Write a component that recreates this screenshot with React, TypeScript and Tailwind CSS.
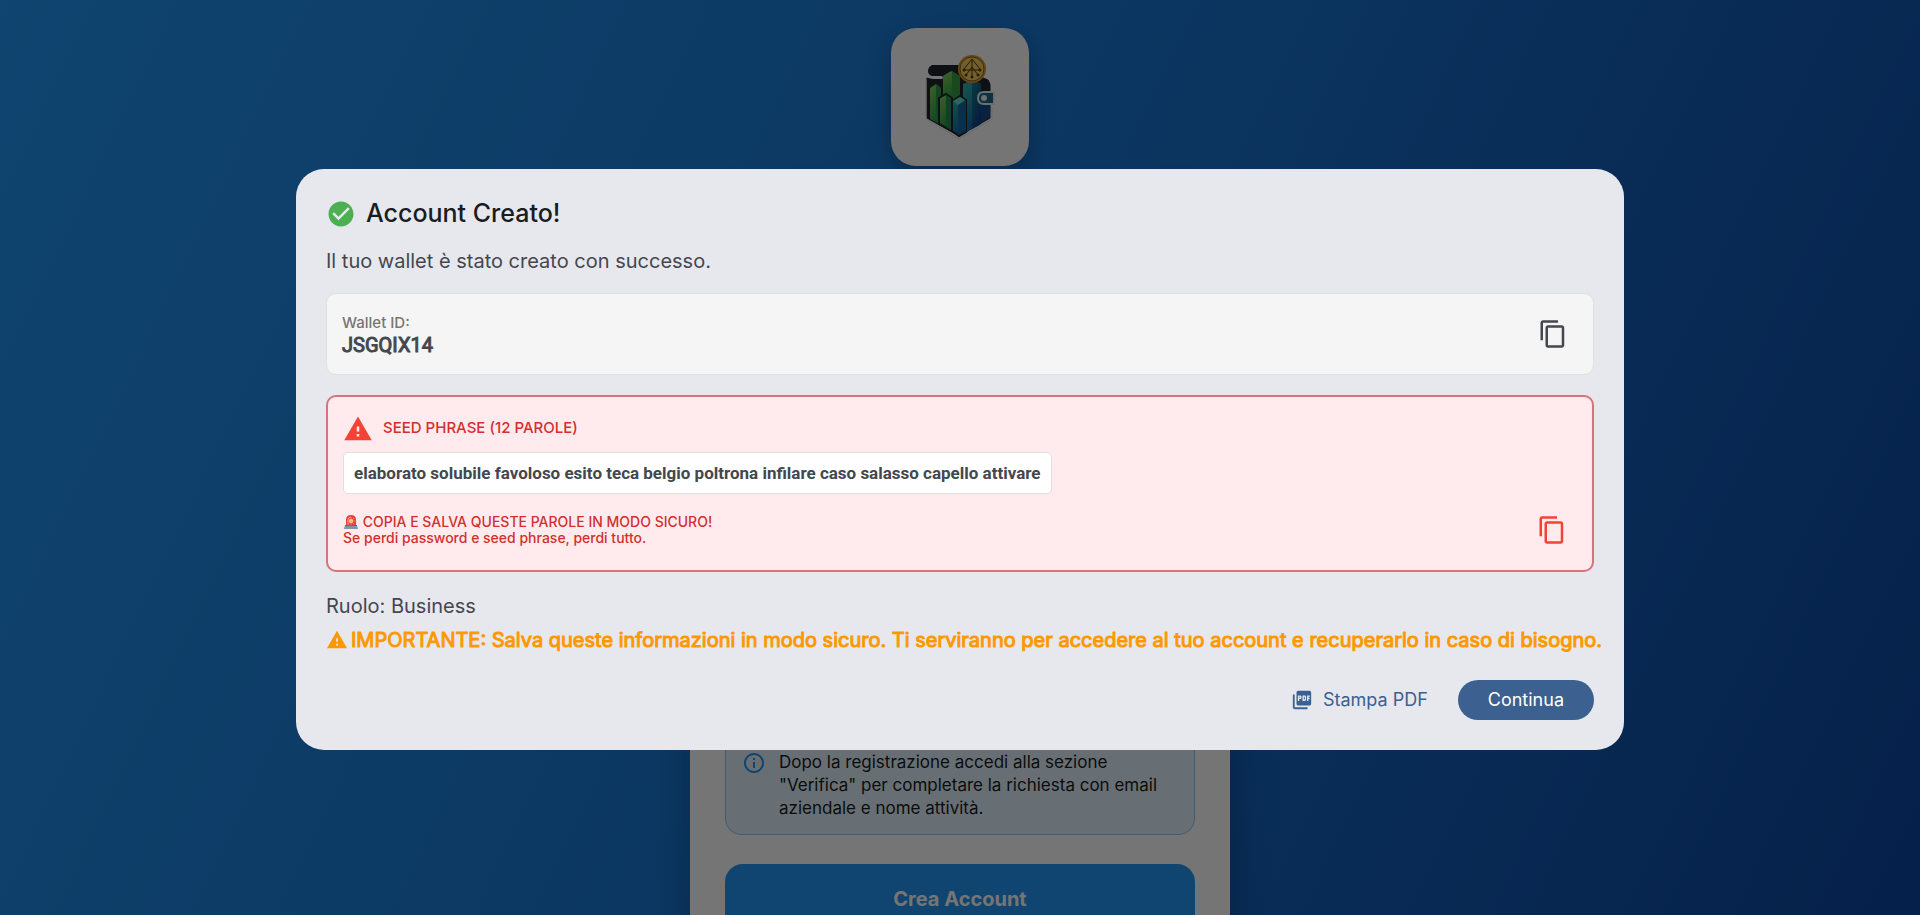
import { MdCheckCircle, MdContentCopy, MdInfoOutline, MdPictureAsPdf, MdWarning } from 'react-icons/md';

const WALLET_ID = 'JSGQIX14';
const SEED = 'elaborato solubile favoloso esito teca belgio poltrona infilare caso salasso capello attivare';

function Logo() {
    return (
        <svg viewBox="0 0 138 138" className="w-full h-full" aria-hidden="true">
            <defs>
                <linearGradient id="bar" x1="0" y1="0" x2="0.4" y2="1">
                    <stop offset="0" stopColor="#8fd65a" />
                    <stop offset="1" stopColor="#1f9a44" />
                </linearGradient>
                <linearGradient id="teal" x1="0" y1="0" x2="0.4" y2="1">
                    <stop offset="0" stopColor="#2cc3a4" />
                    <stop offset="1" stopColor="#1260b0" />
                </linearGradient>
                <linearGradient id="deep" x1="0" y1="0" x2="0.6" y2="1">
                    <stop offset="0" stopColor="#14808f" />
                    <stop offset="1" stopColor="#0f3f86" />
                </linearGradient>
            </defs>
            <path d="M36 50h15l5-8 36 8 5 2 2 4v34l-31 18-32-18z" fill="#22242a" stroke="#22242a" strokeWidth="1" strokeLinejoin="round" />
            <path d="M35 52v39l33 20 33-20V79" fill="none" stroke="#e4e4e4" strokeWidth="1" strokeLinejoin="round" />
            <path d="M41 37h28v11H41q-4-1-4-5t4-6z" fill="#22242a" />
            <path d="M36 48q3 2 7 2h8" fill="none" stroke="#fff" strokeWidth="2" strokeLinecap="round" />
            <path d="M39 60l6-4 5 4v37l-11-6z" fill="url(#bar)" />
            <path d="M45 56l5 4v37l-5-3z" fill="#2b9c4a" />
            <path d="M52 48l8-5 9 5v24l-8 3-9-4z" fill="url(#bar)" />
            <path d="M61 43l8 5v24l-8 3z" fill="#3a9f45" />
            <path d="M72 56l9-4 9 4v40l-18 10z" fill="url(#teal)" />
            <path d="M81 52l9 4v40l-9 5z" fill="url(#deep)" />
            <path d="M90 76h9v13l-9 6z" fill="#154a8a" />
            <path d="M48 70l7-4 6 4v33l-13-7z" fill="url(#bar)" stroke="#22242a" strokeWidth="2" />
            <path d="M55 67l5 4v31l-5-3z" fill="#1f8f52" />
            <path d="M61 73l8-5 6 4v32l-7 4-7-5z" fill="url(#teal)" stroke="#22242a" strokeWidth="2" />
            <path d="M67 77l8-5v31l-7 3z" fill="#17679f" />
            <path d="M62 73l7-4 5 3-7 5z" fill="#5fdccb" />
            <path d="M103 64H93q-6 0-6 6t6 6h10z" fill="#1b6a8c" stroke="#e8f4f6" strokeWidth="2" />
            <circle cx="93" cy="70" r="3" fill="#e8f4f6" />
            <circle cx="81" cy="41" r="14" fill="#dd9a26" />
            <circle cx="81" cy="41" r="12" fill="#f7cf62" stroke="#8c6418" strokeWidth="1" />
            <path d="M81 31v17M81 31l-8 10M81 31l8 10M72 42h18M81 39l-6 8M81 39l6 8" fill="none" stroke="#5b3c05" strokeWidth="1" />
            <g fill="#5b3c05">
                <circle cx="73" cy="42" r="1.5" />
                <circle cx="89" cy="42" r="1.5" />
                <circle cx="75" cy="47" r="1.5" />
                <circle cx="87" cy="47" r="1.5" />
                <circle cx="81" cy="49" r="1.5" />
            </g>
        </svg>
    );
}

function Siren() {
    return (
        <svg viewBox="0 0 16 16" className="inline-block w-4 h-4 align-text-bottom" aria-hidden="true">
            <path d="M3 11V6q0-5 5-5t5 5v5z" fill="#e8403a" />
            <path d="M5 11V6q0-3 3-3" fill="none" stroke="#f7968f" strokeWidth="1" />
            <circle cx="8" cy="7" r="2" fill="#ffd9a8" />
            <path d="M8 3v8M4 7h8M5 4l6 6M11 4l-6 6" stroke="#fbb08a" strokeWidth="0.6" />
            <path d="M2 11h12l1 4H1z" fill="#7d98a5" />
            <path d="M2 11h12v1H2z" fill="#5a707c" />
        </svg>
    );
}

function RegisterPage() {
    return (
        <main className="h-screen overflow-hidden flex flex-col items-center pt-7 bg-[linear-gradient(115.5deg,#2196f3,#1976d2_50%,#0d47a1)]">
            <div className="shrink-0 size-[138px] rounded-[25px] bg-white shadow-[0_10px_25px_rgba(0,0,0,0.25)]">
                <Logo />
            </div>
            <section className="shrink-0 w-full max-w-[540px] mt-8 px-[35px] pt-[536px] pb-9 rounded-[30px] bg-white shadow-[0_10px_40px_rgba(0,0,0,0.25)]">
                <div className="flex gap-[13px] px-4 pt-4 pb-[14px] rounded-2xl border border-[#90caf9] bg-[#e3f2fd]">
                    <MdInfoOutline className="shrink-0 size-6 text-[#2196f3]" />
                    <p className="text-[17px] leading-[23px] text-[#191c20]">
                        Dopo la registrazione accedi alla sezione "Verifica" per completare la richiesta con email aziendale e nome attività.
                    </p>
                </div>
                <button className="mt-[29px] w-full h-[70px] rounded-[18px] bg-[#2196f3] text-[20px] font-bold text-white">
                    Crea Account
                </button>
            </section>
        </main>
    );
}

export default function App() {
    return (
        <div className="font-[Inter,sans-serif]">
            <RegisterPage />
            <div className="fixed inset-0 flex items-center justify-center px-12 pt-[3px] bg-black/54">
                <div role="dialog" aria-labelledby="dialog-title" className="w-full max-w-[1328px] p-[30px] rounded-[28px] bg-[#e6e8ee] text-[#44474e]">
                    <div className="flex items-center gap-[10px] h-[30px]">
                        <MdCheckCircle className="size-[30px] text-[#4caf50]" />
                        <h2 id="dialog-title" className="text-[25px] font-medium text-[#191c20]">Account Creato!</h2>
                    </div>
                    <p className="mt-5 text-[20px] leading-6">Il tuo wallet è stato creato con successo.</p>

                    <div className="mt-5 flex items-center justify-between p-[15px] rounded-[10px] border border-[#e0e0e0] bg-[#f5f5f5]">
                        <div>
                            <div className="text-[15px] leading-[22px] font-medium text-[#757575]">Wallet ID:</div>
                            <div className="font-[Roboto,sans-serif] text-[20px] leading-[22px] [-webkit-text-stroke:1px]">{WALLET_ID}</div>
                        </div>
                        <button aria-label="Copia Wallet ID" className="p-[10px]">
                            <MdContentCopy className="size-[30px]" />
                        </button>
                    </div>

                    <div className="mt-5 px-[15px] pt-[17px] pb-[15px] rounded-[10px] border-2 border-[#d9737a] bg-[#ffebee] text-[#d32f2f]">
                        <div className="flex items-center gap-[10px]">
                            <MdWarning className="size-[30px] text-[#f44336]" />
                            <span className="text-[15px] font-medium">SEED PHRASE (12 PAROLE)</span>
                        </div>
                        <div className="mt-2 w-fit px-[10px] py-2 rounded-[5px] border border-[#e0e0e0] bg-white font-[Roboto,sans-serif] text-[17px] leading-6 font-bold text-[#44474e]">
                            {SEED}
                        </div>
                        <div className="mt-[11px] flex items-center justify-between">
                            <p className="text-[14px] leading-4 font-medium">
                                <Siren /> COPIA E SALVA QUESTE PAROLE IN MODO SICURO!
                                <br />
                                Se perdi password e seed phrase, perdi tutto.
                            </p>
                            <button aria-label="Copia seed phrase" className="p-[10px]">
                                <MdContentCopy className="size-[30px] text-[#f44336]" />
                            </button>
                        </div>
                    </div>

                    <p className="mt-[22px] text-[20px] leading-6">Ruolo: Business</p>
                    <p className="mt-[10px] flex items-center gap-[3px] text-[20px] leading-6 text-[#ff9800]">
                        <MdWarning className="shrink-0 size-[22px]" />
                        <span className="xl:whitespace-nowrap [-webkit-text-stroke:1px]">
                            IMPORTANTE: Salva queste informazioni in modo sicuro. Ti serviranno per accedere al tuo account e recuperarlo in caso di bisogno.
                        </span>
                    </p>

                    <div className="mt-7 flex items-center justify-end gap-[30px] text-[18px]">
                        <button className="flex items-center gap-[10px] text-[#3c6090]">
                            <MdPictureAsPdf className="size-[22px]" /> Stampa PDF
                        </button>
                        <button className="h-10 px-[30px] rounded-full bg-[#3c6090] text-white">Continua</button>
                    </div>
                </div>
            </div>
        </div>
    );
}
